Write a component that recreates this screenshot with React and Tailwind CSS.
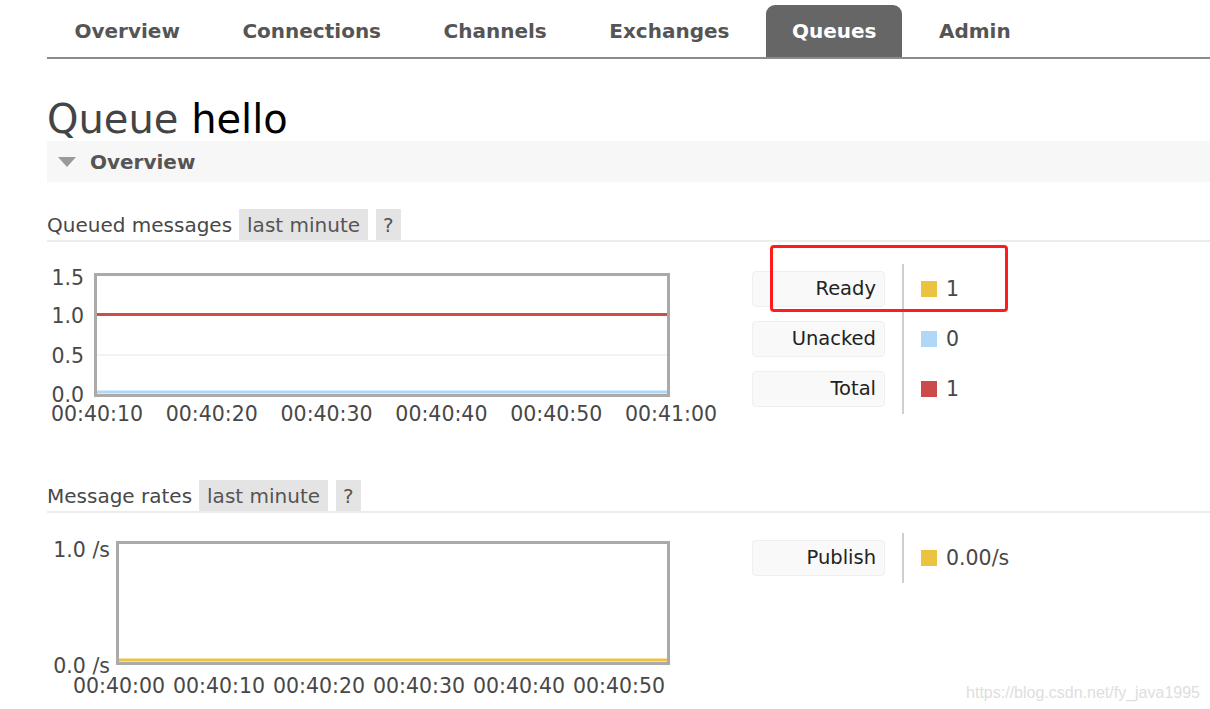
const tabs = ["Overview", "Connections", "Channels", "Exchanges", "Queues", "Admin"];

function Header({ title }) {
  return (
    <div className="flex h-[33px] items-start border-b-2 border-[#ececec]">
      <span className="flex h-[31px] items-center text-[20px] text-[#484848]">{title}</span>
      <span className="ml-[7px] flex h-[31px] items-center bg-[#e4e4e4] px-[8px] text-[20px] text-[#555]">last minute</span>
      <span className="ml-[8px] flex h-[31px] items-center bg-[#e4e4e4] px-[7px] text-[20px] text-[#555]">?</span>
    </div>
  );
}

function LegendRows({ rows }) {
  return (
    <div className="flex">
      <div className="mr-[17px] flex flex-col gap-[14px] py-[7px]">
        {rows.map((r) => (
          <div key={r.label} className="flex h-[36px] w-[133px] items-center justify-end rounded-[4px] border border-[#efefef] bg-[#f9f9f9] pr-[8px] text-[19.5px] text-[#222]">
            {r.label}
          </div>
        ))}
      </div>
      <div className="w-[2px] self-stretch bg-[#cfcfcf]" />
      <div className="flex flex-col gap-[14px] py-[7px] pl-[17px]">
        {rows.map((r) => (
          <div key={r.label} className="flex h-[36px] items-center gap-[9px] text-[20.5px] text-[#484848]">
            <span className={`inline-block h-[16px] w-[16px] ${r.color}`} />
            <span>{r.value}</span>
          </div>
        ))}
      </div>
    </div>
  );
}

function Chart1() {
  const xs = ["00:40:10", "00:40:20", "00:40:30", "00:40:40", "00:40:50", "00:41:00"];
  const ys = [["1.5", 21], ["1.0", 59], ["0.5", 99], ["0.0", 138]];
  return (
    <svg width="705" height="172" className="block" style={{ fontFamily: "'DejaVu Sans', sans-serif" }}>
      <line x1="49" x2="622" y1="98" y2="98" stroke="#eeeeee" strokeWidth="1.5" />
      <line x1="49" x2="622" y1="135" y2="135" stroke="#afd8f8" strokeWidth="3" />
      <line x1="49" x2="622" y1="57.5" y2="57.5" stroke="#cf4d49" strokeWidth="3" />
      <rect x="48.5" y="17.5" width="573" height="121" fill="none" stroke="#aaaaaa" strokeWidth="3" />
      {ys.map(([t, y]) => (
        <text key={t} x="37" y={y} textAnchor="end" dominantBaseline="central" fontSize="20.5" fill="#484848">{t}</text>
      ))}
      {xs.map((t, i) => (
        <text key={t} x={50 + i * 114.8} y="164" textAnchor="middle" fontSize="20.5" fill="#484848">{t}</text>
      ))}
    </svg>
  );
}

function Chart2() {
  const xs = ["00:40:00", "00:40:10", "00:40:20", "00:40:30", "00:40:40", "00:40:50"];
  return (
    <svg width="705" height="175" className="block" style={{ fontFamily: "'DejaVu Sans', sans-serif" }}>
      <line x1="71" x2="622" y1="132" y2="132" stroke="#edc240" strokeWidth="3" />
      <rect x="70.5" y="14.5" width="551" height="121" fill="none" stroke="#aaaaaa" strokeWidth="3" />
      <text x="63" y="22" textAnchor="end" dominantBaseline="central" fontSize="20.5" fill="#484848">1.0 /s</text>
      <text x="63" y="138" textAnchor="end" dominantBaseline="central" fontSize="20.5" fill="#484848">0.0 /s</text>
      {xs.map((t, i) => (
        <text key={t} x={72 + i * 100} y="165" textAnchor="middle" fontSize="20.5" fill="#484848">{t}</text>
      ))}
    </svg>
  );
}

export default function App() {
  return (
    <div className="relative min-h-[709px] w-full overflow-hidden bg-white pl-[47px] font-['DejaVu_Sans',sans-serif] text-[#484848]">
      <nav className="mt-[5px] flex gap-[11.5px] border-b-2 border-[#8c8c8c] pl-[2px]">
        {tabs.map((t) =>
          t === "Queues" ? (
            <div key={t} className="flex h-[52px] items-center rounded-t-[9px] bg-[#666666] px-[25.5px] text-[20px] font-bold text-white">{t}</div>
          ) : (
            <div key={t} className="flex h-[52px] items-center px-[25.5px] text-[20px] font-bold text-[#555]">{t}</div>
          )
        )}
      </nav>

      <h1 className="mt-[40px] text-[40px] font-normal leading-[40px]">
        <span className="text-[#444]">Queue</span> <span className="text-black">hello</span>
      </h1>

      <div className="mt-[2px] flex h-[41px] items-center bg-[#f7f7f7] pl-[11px]">
        <svg width="18" height="10" viewBox="0 0 18 10"><polygon points="0,0 18,0 9,10" fill="#9a9a9a" /></svg>
        <span className="ml-[14px] text-[20px] font-bold text-[#555]">Overview</span>
      </div>

      <div className="mt-[27px]">
        <Header title="Queued messages" />
        <div className="flex items-start">
          <div className="mt-[15px]"><Chart1 /></div>
          <div className="mt-[22px]">
            <LegendRows
              rows={[
                { label: "Ready", value: "1", color: "bg-[#edc240]" },
                { label: "Unacked", value: "0", color: "bg-[#afd8f8]" },
                { label: "Total", value: "1", color: "bg-[#cb4b4b]" },
              ]}
            />
          </div>
        </div>
      </div>

      <div className="mt-[51px]">
        <Header title="Message rates" />
        <div className="flex items-start">
          <div className="mt-[15px]"><Chart2 /></div>
          <div className="mt-[20px]">
            <LegendRows rows={[{ label: "Publish", value: "0.00/s", color: "bg-[#edc240]" }]} />
          </div>
        </div>
      </div>

      <div className="pointer-events-none absolute left-[770px] top-[245px] h-[67px] w-[238px] rounded-[4px] border-[3px] border-[#ff1c1c]" />

      <div className="absolute right-[10px] top-[681px] font-['Liberation_Sans',sans-serif] text-[16px] text-[#dedede]">https://blog.csdn.net/fy_java1995</div>
    </div>
  );
}
